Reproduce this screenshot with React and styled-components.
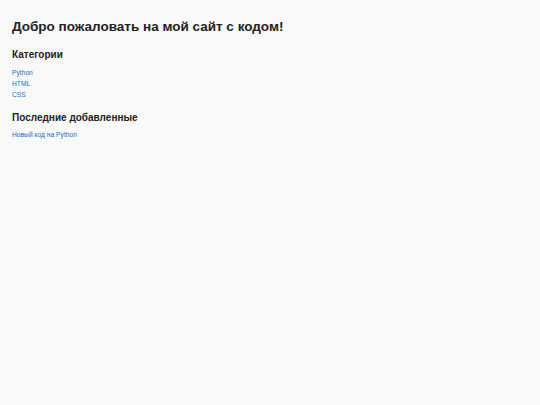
import React from 'react';
import styled, { createGlobalStyle } from 'styled-components';

const GlobalStyle = createGlobalStyle`
    html, body {
        margin: 0;
        padding: 0;
        background: #f9f9f9;
    }
    body {
        font-family: "Liberation Sans", Arial, sans-serif;
        color: #222;
    }
`;

const categories = ['Python', 'HTML', 'CSS'];
const latest = ['Новый код на Python'];

const App = () => {
    return (
        <Page>
            <GlobalStyle />
            <Title>Добро пожаловать на мой сайт с кодом!</Title>
            <Section>
                <SectionTitle>Категории</SectionTitle>
                <LinkList>
                    {categories.map((c) => (
                        <li key={c}><a href="#">{c}</a></li>
                    ))}
                </LinkList>
            </Section>
            <Section>
                <SectionTitle>Последние добавленные</SectionTitle>
                <LinkList>
                    {latest.map((c) => (
                        <li key={c}><a href="#">{c}</a></li>
                    ))}
                </LinkList>
            </Section>
        </Page>
    );
}

export default App;

const Page = styled.div`
    min-height: 405px;
    box-sizing: border-box;
    padding: 19px 12px;
`;

const Title = styled.h1`
    margin: 0 0 14px 0;
    font-size: 13.5px;
    line-height: 16px;
    font-weight: bold;
    color: #222;
`;

const Section = styled.section`
    margin-bottom: 12px;
`;

const SectionTitle = styled.h2`
    margin: 0 0 5.5px 0;
    font-size: 10px;
    line-height: 12px;
    font-weight: bold;
    color: #222;
`;

const LinkList = styled.ul`
    list-style: none;
    margin: 0;
    padding: 0;

    li {
        font-size: 6.7px;
        line-height: 11px;
    }

    a {
        color: #1a6fc9;
        text-decoration: none;
    }
`;
